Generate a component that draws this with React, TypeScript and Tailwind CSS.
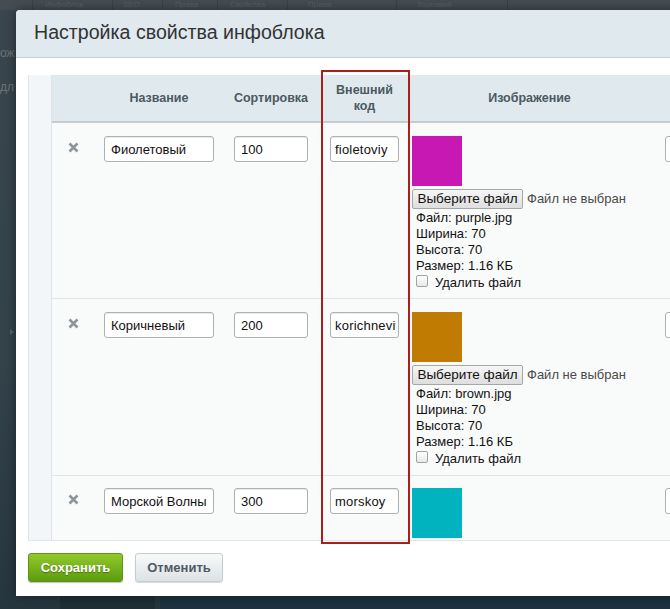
import React from "react";

const XIcon = () => (
  <svg width="11" height="11" viewBox="0 0 11 11">
    <path d="M1.5 1.5 L9.5 9.5 M9.5 1.5 L1.5 9.5" stroke="#8b959a" strokeWidth="2.6" strokeLinecap="butt" />
  </svg>
);

type RowData = {
  name: string;
  sort: string;
  code: string;
  color: string;
  file?: string;
  h: string;
  pt: string;
};

const rows: RowData[] = [
  { name: "Фиолетовый", sort: "100", code: "fioletoviy", color: "#c718b4", file: "purple.jpg", h: "h-[176px]", pt: "pt-[13px]" },
  { name: "Коричневый", sort: "200", code: "korichneviy", color: "#bf7b02", file: "brown.jpg", h: "h-[177px]", pt: "pt-[13px]" },
  { name: "Морской Волны", sort: "300", code: "morskoy", color: "#00b3bf", h: "h-[64px]", pt: "pt-[12px]" },
];

const inputCls =
  "h-[26px] rounded-[3px] border border-[#a9b2b7] bg-white text-[13px] text-[#111] shadow-[inset_0_1px_1px_rgba(0,0,0,0.08)] outline-none font-['Liberation_Sans',Arial,sans-serif]";

function Row({ r, last }: { r: RowData; last: boolean }) {
  return (
    <div className={`flex ${r.h} ${r.pt} ${last ? "" : "border-b border-[#dfe5e8]"} bg-[#f9fbfb]`}>
      <div className="w-[42px] flex justify-center pt-[6px] pl-[1px]">
        <XIcon />
      </div>
      <div className="w-[130px] pl-[10px]">
        <input readOnly value={r.name} className={`${inputCls} w-[110px] px-[6px]`} />
      </div>
      <div className="w-[94px] pl-[10px]">
        <input readOnly value={r.sort} className={`${inputCls} w-[74px] px-[6px]`} />
      </div>
      <div className="w-[91px] pl-[12px]">
        <input readOnly value={r.code} className={`${inputCls} w-[69px] pl-[4px] pr-[2px] tracking-[0.2px]`} />
      </div>
      <div className="w-[254px] pl-[3px] text-[13px] leading-[16px] text-[#111]">
        <div className="w-[50px] h-[50px]" style={{ backgroundColor: r.color }} />
        {r.file && (
          <>
            <div className="flex items-center mt-[3px]">
              <div className="h-[20px] w-[111px] flex items-center justify-center rounded-[2px] border border-[#a6a6a6] bg-[linear-gradient(#f6f6f6,#dedede)] text-[13.5px] text-[#111]">
                Выберите файл
              </div>
              <span className="ml-[4px] text-[13px] text-[#4a4a4a]">Файл не выбран</span>
            </div>
            <div className="pl-[4px] pt-[1px]">
              <div>Файл: {r.file}</div>
              <div>Ширина: 70</div>
              <div>Высота: 70</div>
              <div>Размер: 1.16 КБ</div>
              <div className="flex items-start h-[16px]">
                <span className="mt-[1px] w-[12px] h-[12px] rounded-[2px] border border-[#a3a3a3] bg-[linear-gradient(#fdfdfd,#e8e8e8)]" />
                <span className="ml-[7px] text-[13px] mt-[1px]">Удалить файл</span>
              </div>
            </div>
          </>
        )}
      </div>
      <div className="flex-1 pl-[2px]">
        <div className="h-[26px] w-[40px] rounded-[3px] border border-[#a9b2b7] bg-white" />
      </div>
    </div>
  );
}

export default function App() {
  return (
    <div className="relative w-[670px] h-[609px] overflow-hidden bg-[linear-gradient(180deg,#3a464e_0%,#33424b_60%,#26363f_100%)] font-['Liberation_Sans',Arial,sans-serif]">
      {/* underlying page (dimmed) */}
      <div className="absolute left-0 top-0 w-full h-[10px] bg-[#454d53] flex text-[8px] text-[#566066] leading-[10px]">
        <div className="w-[33px] border-r border-[#3b4348]" />
        <div className="w-[80px] border-r border-[#3b4348] pl-[12px]">Инфоблок</div>
        <div className="w-[50px] border-r border-[#3b4348] pl-[10px]">SEO</div>
        <div className="w-[55px] border-r border-[#3b4348] pl-[12px]">Права</div>
        <div className="w-[70px] border-r border-[#3b4348] pl-[12px]">Свойства</div>
        <div className="w-[109px] border-r border-[#3b4348] pl-[20px]">Права</div>
        <div className="w-[111px] border-r border-[#3b4348] pl-[20px]">Торговый</div>
        <div className="flex-1" />
      </div>
      <div className="absolute left-0 top-[46px] text-[12px] text-[#6b757b] leading-[14px]">ож</div>
      <div className="absolute left-0 top-[80px] text-[12px] text-[#6b757b] leading-[14px]">дл</div>
      <div className="absolute left-[10px] top-[329px] w-0 h-0 border-y-[3px] border-y-transparent border-l-[4px] border-l-[#55636b]" />
      <div className="absolute left-[60px] top-[596px] w-[95px] h-[13px] bg-[#1f2f35]" />
      <div className="absolute left-[160px] top-[596px] w-[510px] h-[13px] bg-[#1c3440]" />

      {/* dialog */}
      <div className="absolute left-[16px] top-[10px] w-[680px] h-[586px] bg-white rounded-tl-[4px] overflow-hidden flex flex-col shadow-[0_0_12px_rgba(0,0,0,0.45)]">
        <div className="h-[48px] shrink-0 bg-[#dfe9ee] border-b border-[#c8d1d5] pl-[18px] flex items-center text-[19.6px] text-[#333] pb-[2px]">
          Настройка свойства инфоблока
        </div>
        <div className="pl-[12px] pt-[17px]">
          <div className="flex border-b border-[#e0e6e9]">
            <div className="w-[24px] shrink-0 bg-[#f2f6f8] border-l border-r border-[#dfe6ea]" />
            <div className="flex-1 flex flex-col">
              <div className="h-[48px] flex border-b-2 border-[#c5cdd1] bg-[#e0eaee] text-[12.5px] font-bold text-[#4b5962]">
                <div className="w-[42px]" />
                <div className="w-[130px] flex items-center justify-center">Название</div>
                <div className="w-[94px] flex items-center justify-center">Сортировка</div>
                <div className="w-[91px] flex flex-col items-center justify-center leading-[16px] pl-[2px]">
                  <span>Внешний</span>
                  <span>код</span>
                </div>
                <div className="w-[241px] flex items-center justify-center">Изображение</div>
                <div className="flex-1" />
              </div>
              {rows.map((r, i) => (
                <Row key={i} r={r} last={i === rows.length - 1} />
              ))}
            </div>
          </div>
          <div className="flex gap-[12px] mt-[12px]">
            <button className="h-[29px] w-[95px] rounded-[3px] border border-[#5f9412] bg-[linear-gradient(#93c92b,#5c9c0e)] text-white text-[13px] font-bold [text-shadow:0_1px_1px_rgba(0,0,0,0.35)] shadow-[0_1px_1px_rgba(0,0,0,0.25)]">
              Сохранить
            </button>
            <button className="h-[29px] w-[88px] rounded-[3px] border border-[#c4ccd0] bg-[linear-gradient(#f8fafa,#dce2e5)] text-[#4f5b63] text-[13px] font-bold shadow-[0_1px_1px_rgba(0,0,0,0.15)]">
              Отменить
            </button>
          </div>
        </div>
      </div>

      {/* red annotation frame */}
      <div className="absolute left-[321px] top-[70px] w-[89px] h-[474px] border-2 border-[#a91f1c]" />
    </div>
  );
}
